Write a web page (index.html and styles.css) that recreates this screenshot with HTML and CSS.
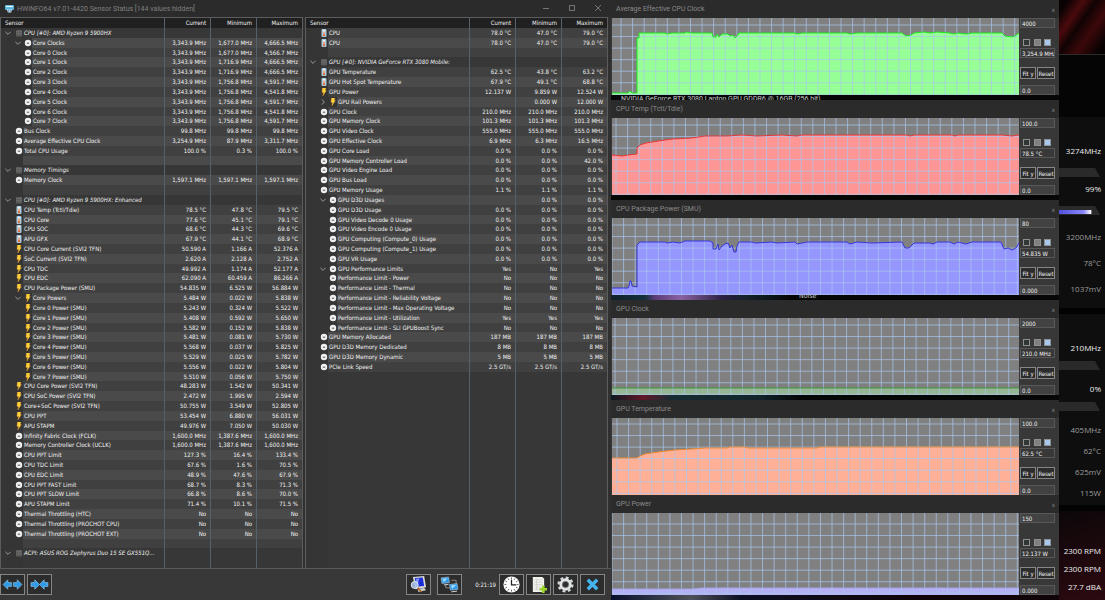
FILE: index.html
```html
<!DOCTYPE html>
<html lang="en">
<head>
  <meta charset="UTF-8">
  <meta name="viewport" content="width=device-width, initial-scale=1.0">
  <title>HWiNFO64 Sensor Status</title>
  <link rel="stylesheet" href="styles.css">
</head>
<body>
  <!-- icon set -->
  <svg class="defs" width="0" height="0" aria-hidden="true">
    <symbol id="i-clock" viewBox="0 0 8 8">
      <circle cx="4" cy="4" r="3.2" fill="#f0f0f0"/>
      <path d="M2.8 4.2H5.2" stroke="#555" stroke-width="1"/>
    </symbol>
    <symbol id="i-temp" viewBox="0 0 8 8">
      <rect x="1.500" y="0" width="5" height="8" rx="1" fill="#a9cbe0"/>
      <path d="M4 1V6" stroke="#fff" stroke-width="1.6"/>
      <path d="M4 2.5V7" stroke="#d9622b" stroke-width="1"/>
      <circle cx="4" cy="6.2" r="1.1" fill="#e06a30"/>
    </symbol>
    <symbol id="i-bolt" viewBox="0 0 8 8">
      <path d="M2.4 0H6L5.2 2.6H6.4L2.8 8L3.6 4.4H2Z" fill="#ffd83c" stroke="#e8912a" stroke-width=".4"/>
    </symbol>
    <symbol id="i-chip" viewBox="0 0 8 8">
      <rect x="1" y="1" width="6" height="6.4" rx="1" fill="#5c5c5c"/>
      <path d="M1 2.6H7M1 4.4H7" stroke="#777" stroke-width=".5"/>
    </symbol>
    <symbol id="i-down" viewBox="0 0 8 8"><path d="M1.4 2.8L4 5.4L6.6 2.8" fill="none" stroke="#9a9a9a"/></symbol>
    <symbol id="i-right" viewBox="0 0 8 8"><path d="M2.8 1.4L5.4 4L2.8 6.6" fill="none" stroke="#9a9a9a"/></symbol>
  </svg>

  <div class="desktop">
    <main class="app">
      <header class="titlebar">
        <svg class="logo" viewBox="0 0 9 9"><rect y="1" width="9" height="5" rx="1" fill="#58b4dc"/><path d="M1 2.5H8" stroke="#e6f6ff" stroke-width="1.2"/><path d="M2 5.2H7L6.2 8.6H2.8Z" fill="#d8e6ee"/><path d="M3.6 5.4V8M5.3 5.4V8" stroke="#2484b8" stroke-width=".7"/></svg>
        <h1>HWiNFO64 v7.01-4420 Sensor Status [144 values hidden]</h1>
        <button class="win-btn" aria-label="Minimize"><svg viewBox="0 0 8 8"><path d="M1 4.5H7"/></svg></button>
        <button class="win-btn" aria-label="Maximize"><svg viewBox="0 0 8 8"><path d="M1.5 1.5H6.5V6.5H1.5Z"/></svg></button>
        <button class="win-btn" aria-label="Close"><svg viewBox="0 0 8 8"><path d="M1 1L7 7M7 1L1 7"/></svg></button>
      </header>

      <div class="panes">
        <div class="pane">
          <table class="sensors">
            <thead><tr><th>Sensor</th><th>Current</th><th>Minimum</th><th>Maximum</th></tr></thead>
            <tbody id="sensors-cpu"></tbody>
          </table>
        </div>
        <div class="pane">
          <table class="sensors">
            <thead><tr><th>Sensor</th><th>Current</th><th>Minimum</th><th>Maximum</th></tr></thead>
            <tbody id="sensors-gpu"></tbody>
          </table>
        </div>
      </div>

      <footer class="toolbar">
        <button class="tool" aria-label="Expand columns"><svg viewBox="0 0 22 18"><path d="M1 9L6 4V7H10V11H6V14ZM21 9L16 4V7H12V11H16V14Z" fill="#2f9be8" stroke="#9ccdf0" stroke-width=".6"/></svg></button>
        <button class="tool" aria-label="Shrink columns"><svg viewBox="0 0 22 18"><path d="M11 9L6 4V7H2V11H6V14ZM11 9L16 4V7H20V11H16V14Z" fill="#2f9be8" stroke="#9ccdf0" stroke-width=".6"/></svg></button>
        <span class="spacer"></span>
        <button class="tool" aria-label="Summary"><svg viewBox="0 0 22 18"><path d="M5 1L17 0L19 12L8 14Z" fill="#dcdcd6"/><path d="M7 2L15.500 1.500L17 10.500L8.500 11.500Z" fill="#1a2cd8"/><path d="M8 3L12 2.500L10 10L8.800 10Z" fill="#7c8cf4"/><path d="M10 14L17 12.500L19 15L11 17Z" fill="#c9c9c4"/><circle cx="7" cy="9.500" r="3.700" fill="#a9c6f0" fill-opacity=".85" stroke="#e8eef6"/><path d="M10 12.500L14 17" stroke="#a9622c" stroke-width="1.800"/></svg></button>
        <button class="tool tool-net" aria-label="Remote"><svg viewBox="0 0 22 18"><path d="M7 9V12.500H12M13 4.500H18V9" stroke="#8a8a8a" fill="none"/><path d="M2 2L10 1L11 7L3 8Z" fill="#2e9df0" stroke="#b4c4d0" stroke-width=".6"/><path d="M3.500 3L9 2.300L5 6.500Z" fill="#a4dcff"/><path d="M5 9.500L10 8.800" stroke="#ddd"/><path d="M11 9L19 8L20 14L12 15Z" fill="#2e9df0" stroke="#b4c4d0" stroke-width=".6"/><path d="M12.500 10L18 9.300L14 13.500Z" fill="#a4dcff"/><path d="M13 16.800L19 16" stroke="#ddd"/></svg></button>
        <time class="uptime">0:21:19</time>
        <button class="tool" aria-label="Reset clock"><svg viewBox="0 0 22 18"><circle cx="11" cy="9" r="8.600" fill="#fff"/><g stroke="#222"><path d="M11 1.500V3.500M11 14.500V16.500M3.500 9H5.500M16.500 9H18.500M7.300 2.500L8.200 4.200M14.700 2.500L13.800 4.200M7.300 15.500L8.200 13.800M14.700 15.500L13.800 13.800M4.500 5.300L6.200 6.200M4.500 12.700L6.200 11.800M17.500 5.300L15.800 6.200M17.500 12.700L15.800 11.800" stroke-width=".7"/><path d="M11 4V9.500H16" fill="none" stroke-width="1.300"/></g></svg></button>
        <button class="tool" aria-label="Logging start"><svg viewBox="0 0 22 18"><path d="M5 1H15L17 3V17H5Z" fill="#f0f0ec"/><path d="M7 4H15M7 6.500H15M7 9H15M7 11.500H13M7 14H12M9 3V15" stroke="#c4c4c0" stroke-width=".6"/><path d="M16 10V18M12 14H20" stroke="#9ed62c" stroke-width="2.800"/></svg></button>
        <button class="tool" aria-label="Settings"><svg viewBox="0 0 22 18"><circle cx="11" cy="9" r="7.300" fill="none" stroke="#d4d8d8" stroke-width="2.400" stroke-dasharray="3.100 2.630"/><circle cx="11" cy="9" r="5" fill="none" stroke="#e2e6e6" stroke-width="3"/><circle cx="11" cy="9" r="3.300" fill="none" stroke="#8b9292" stroke-width=".6"/></svg></button>
        <button class="tool" aria-label="Close sensors"><svg viewBox="0 0 22 18"><path d="M6 4L16 14M16 4L6 14" stroke="#46b2ee" stroke-width="3.600"/></svg></button>
      </footer>
    </main>

    <section class="graphs" id="graphs"></section>

    <aside class="gadget">
      <div class="art"></div>
      <div class="card card-cpu">
        <p class="stat main">3274MHz</p>
        <div class="meter"></div>
        <p class="stat main">99%</p>
        <div class="meter full"></div>
        <p class="stat">3200MHz</p>
        <p class="stat">78°C</p>
        <p class="stat">1037mV</p>
      </div>
      <div class="card card-gpu">
        <p class="stat main">210MHz</p>
        <div class="meter"></div>
        <p class="stat main">0%</p>
        <div class="meter"></div>
        <p class="stat">405MHz</p>
        <p class="stat">62°C</p>
        <p class="stat">625mV</p>
        <p class="stat">115W</p>
      </div>
      <div class="card card-fan">
        <p class="stat main">2300 RPM</p>
        <p class="stat main">2300 RPM</p>
        <p class="stat main">27.7 dBA</p>
      </div>
    </aside>
  </div>

  <script>
    // type|level|name|current|minimum|maximum, an empty line is a spacer row
    // type: g group, c clock, t temperature, p power; + open node, > closed node
    const cpuRows = `g+|0|CPU [#0]: AMD Ryzen 9 5900HX
c+|2|Core Clocks|3,343.9 MHz|1,677.0 MHz|4,666.5 MHz
c|2|Core 0 Clock|3,343.9 MHz|1,677.0 MHz|4,566.7 MHz
c|2|Core 1 Clock|3,343.9 MHz|1,716.9 MHz|4,666.5 MHz
c|2|Core 2 Clock|3,343.9 MHz|1,716.9 MHz|4,666.5 MHz
c|2|Core 3 Clock|3,343.9 MHz|1,756.8 MHz|4,591.7 MHz
c|2|Core 4 Clock|3,343.9 MHz|1,756.8 MHz|4,541.8 MHz
c|2|Core 5 Clock|3,343.9 MHz|1,756.8 MHz|4,591.7 MHz
c|2|Core 6 Clock|3,343.9 MHz|1,756.8 MHz|4,541.8 MHz
c|2|Core 7 Clock|3,343.9 MHz|1,756.8 MHz|4,591.7 MHz
c|1|Bus Clock|99.8 MHz|99.8 MHz|99.8 MHz
c|1|Average Effective CPU Clock|3,254.9 MHz|87.9 MHz|3,311.7 MHz
c|1|Total CPU Usage|100.0 %|0.3 %|100.0 %

g+|0|Memory Timings
c|1|Memory Clock|1,597.1 MHz|1,597.1 MHz|1,597.1 MHz

g+|0|CPU [#0]: AMD Ryzen 9 5900HX: Enhanced
t|1|CPU Temp (Tctl/Tdie)|78.5 °C|47.8 °C|79.5 °C
t|1|CPU Core|77.6 °C|45.1 °C|79.1 °C
t|1|CPU SOC|68.6 °C|44.3 °C|69.6 °C
t|1|APU GFX|67.9 °C|44.1 °C|68.9 °C
p|1|CPU Core Current (SVI2 TFN)|50.590 A|1.166 A|52.376 A
p|1|SoC Current (SVI2 TFN)|2.620 A|2.128 A|2.752 A
p|1|CPU TDC|49.992 A|1.174 A|52.177 A
p|1|CPU EDC|62.090 A|60.459 A|86.266 A
p|1|CPU Package Power (SMU)|54.835 W|6.525 W|56.884 W
p+|2|Core Powers|5.484 W|0.022 W|5.838 W
p|2|Core 0 Power (SMU)|5.243 W|0.324 W|5.522 W
p|2|Core 1 Power (SMU)|5.408 W|0.592 W|5.650 W
p|2|Core 2 Power (SMU)|5.582 W|0.152 W|5.838 W
p|2|Core 3 Power (SMU)|5.481 W|0.081 W|5.730 W
p|2|Core 4 Power (SMU)|5.568 W|0.037 W|5.825 W
p|2|Core 5 Power (SMU)|5.529 W|0.025 W|5.782 W
p|2|Core 6 Power (SMU)|5.556 W|0.022 W|5.804 W
p|2|Core 7 Power (SMU)|5.510 W|0.056 W|5.750 W
p|1|CPU Core Power (SVI2 TFN)|48.283 W|1.542 W|50.341 W
p|1|CPU SoC Power (SVI2 TFN)|2.472 W|1.995 W|2.594 W
p|1|Core+SoC Power (SVI2 TFN)|50.755 W|3.549 W|52.805 W
p|1|CPU PPT|53.454 W|6.880 W|56.031 W
p|1|APU STAPM|49.976 W|7.050 W|50.030 W
c|1|Infinity Fabric Clock (FCLK)|1,600.0 MHz|1,387.6 MHz|1,600.0 MHz
c|1|Memory Controller Clock (UCLK)|1,600.0 MHz|1,387.6 MHz|1,600.0 MHz
c|1|CPU PPT Limit|127.3 %|16.4 %|133.4 %
c|1|CPU TDC Limit|67.6 %|1.6 %|70.5 %
c|1|CPU EDC Limit|48.9 %|47.6 %|67.9 %
c|1|CPU PPT FAST Limit|68.7 %|8.3 %|71.3 %
c|1|CPU PPT SLOW Limit|66.8 %|8.6 %|70.0 %
c|1|APU STAPM Limit|71.4 %|10.1 %|71.5 %
c|1|Thermal Throttling (HTC)|No|No|No
c|1|Thermal Throttling (PROCHOT CPU)|No|No|No
c|1|Thermal Throttling (PROCHOT EXT)|No|No|No

g+|0|ACPI: ASUS ROG Zephyrus Duo 15 SE GX551Q...`;

    const gpuRows = `t|1|CPU|78.0 °C|47.0 °C|79.0 °C
t|1|CPU|78.0 °C|47.0 °C|79.0 °C

g+|0|GPU [#0]: NVIDIA GeForce RTX 3080 Mobile:
t|1|GPU Temperature|62.5 °C|43.8 °C|63.2 °C
t|1|GPU Hot Spot Temperature|67.9 °C|49.1 °C|68.8 °C
p|1|GPU Power|12.137 W|9.859 W|12.524 W
p>|2|GPU Rail Powers||0.000 W|12.000 W
c|1|GPU Clock|210.0 MHz|210.0 MHz|210.0 MHz
c|1|GPU Memory Clock|101.3 MHz|101.3 MHz|101.3 MHz
c|1|GPU Video Clock|555.0 MHz|555.0 MHz|555.0 MHz
c|1|GPU Effective Clock|6.9 MHz|6.3 MHz|16.5 MHz
c|1|GPU Core Load|0.0 %|0.0 %|0.0 %
c|1|GPU Memory Controller Load|0.0 %|0.0 %|42.0 %
c|1|GPU Video Engine Load|0.0 %|0.0 %|0.0 %
c|1|GPU Bus Load|0.0 %|0.0 %|0.0 %
c|1|GPU Memory Usage|1.1 %|1.1 %|1.1 %
c+|2|GPU D3D Usages||0.0 %|0.0 %
c|2|GPU D3D Usage|0.0 %|0.0 %|0.0 %
c|2|GPU Video Decode 0 Usage|0.0 %|0.0 %|0.0 %
c|2|GPU Video Encode 0 Usage|0.0 %|0.0 %|0.0 %
c|2|GPU Computing (Compute_0) Usage|0.0 %|0.0 %|0.0 %
c|2|GPU Computing (Compute_1) Usage|0.0 %|0.0 %|0.0 %
c|2|GPU VR Usage|0.0 %|0.0 %|0.0 %
c+|2|GPU Performance Limits|Yes|No|Yes
c|2|Performance Limit - Power|No|No|No
c|2|Performance Limit - Thermal|No|No|No
c|2|Performance Limit - Reliability Voltage|No|No|No
c|2|Performance Limit - Max Operating Voltage|No|No|No
c|2|Performance Limit - Utilization|Yes|Yes|Yes
c|2|Performance Limit - SLI GPUBoost Sync|No|No|No
c|1|GPU Memory Allocated|187 MB|187 MB|187 MB
c|1|GPU D3D Memory Dedicated|8 MB|8 MB|8 MB
c|1|GPU D3D Memory Dynamic|5 MB|5 MB|5 MB
c|1|PCIe Link Speed|2.5 GT/s|2.5 GT/s|2.5 GT/s`;

    const icons = { g: 'i-chip', c: 'i-clock', t: 'i-temp', p: 'i-bolt' };
    const ROWS = 55;

    function use(id) {
      return `<svg class="icon"><use href="#${id}"/></svg>`;
    }

    // build the table body and pad it with empty rows
    function fillTable(id, text) {
      const lines = text.split('\n');
      let html = '';
      for (let i = 0; i < ROWS; i++) {
        if (i >= lines.length || lines[i] === '') {
          const cls = i >= lines.length ? 'filler' : 'blank';
          html += `<tr class="${cls}"><td class="name"><span class="tree"></span></td><td></td><td></td><td></td></tr>`;
          continue;
        }
        const [type, level, name, cur = '', min = '', max = ''] = lines[i].split('|');
        const arrow = type[1] ? use(type[1] === '+' ? 'i-down' : 'i-right') : '';
        html += `<tr class="level-${level}">
          <td class="name"><span class="tree">${arrow}${use(icons[type[0]])}</span><span class="label">${name}</span></td>
          <td>${cur}</td><td>${min}</td><td>${max}</td></tr>`;
      }
      document.getElementById(id).innerHTML = html;
    }

    // graph windows: points are x,y pairs in viewBox units
    const graphs = [
      { title: 'Average Effective CPU Clock', top: '4000', value: '3,254.9 MHz', low: '0.0', cls: 'green', h: 77, gx: 9, gy: 7,
        behind: 'NVIDIA GeForce RTX 3080 Laptop GPU GDDR6 @ 16GB (256 bit)',
        pts: '0,75 16,75 18,73 20,75 25,75 25,20 27,20 27,15 53,15 55,16 60,15 73,15 74,14 80,15 100,15 101,19 104,19 105,16 107,19 110,16 116,16 118,18 121,17 123,20 125,18 127,15 183,15 185,16 190,15 235,15 238,16 245,15 290,15 294,18 299,17 302,15 312,14 318,15 325,14 338,15 342,16 346,15 354,16 360,15 390,15 393,18 400,19 403,18 407,15' },
      { title: 'CPU Temp (Tctl/Tdie)', top: '100.0', value: '78.5 °C', low: '0.0', cls: 'red', h: 77, gx: 4, gy: 7,
        pts: '0,37 10,38 16,37 25,36 25,30 28,27 34,25 46,23 60,21 80,20 93,18 115,18 130,17 145,18 170,17 185,18 190,17 295,17 298,18 302,17 340,17 343,18 346,17 390,17 400,18 407,17' },
      { title: 'CPU Package Power (SMU)', top: '80', value: '54.835 W', low: '0.000', cls: 'blue', h: 77, gx: 0, gy: 7, behind: 'Noise',
        pts: '0,70 16,70 17,68 18,63 19,63 20,68 25,69 25,27 28,24 53,24 55,25 61,24 68,25 73,23 98,23 101,25 101,31 104,31 106,26 107,32 110,28 113,26 116,25 118,30 120,27 122,34 124,34 125,28 127,24 140,24 143,25 160,24 165,25 183,24 185,26 195,24 235,24 238,26 245,24 260,25 290,24 293,30 297,30 302,25 318,25 321,26 325,24 338,24 342,26 346,24 354,26 360,24 389,24 392,31 396,30 400,32 404,30 407,25' },
      { title: 'GPU Clock', top: '2000', value: '210.0 MHz', low: '0.0', cls: 'dark-green', h: 77, gx: 3, gy: 7, pts: '0,70 407,70' },
      { title: 'GPU Temperature', top: '100.0', value: '62.5 °C', low: '0.0', cls: 'orange', h: 77, gx: 5, gy: 6,
        pts: '0,40 25,40 28,38 33,36 46,34 63,32 80,31 93,30 115,30 118,29 133,29 136,30 205,30 208,29 407,29' },
      { title: 'GPU Power', top: '150', value: '12.137 W', low: '0.000', cls: 'violet', h: 82, gx: 0, gy: 11, pts: '0,76 80,76 90,75 407,75' }
    ];

    function gridLines(g) {
      let d = '';
      for (let x = g.gx; x < 407; x += 11.58) d += `M${x} 0V${g.h}`;
      for (let y = g.gy; y < g.h; y += 11.55) d += `M0 ${y}H407`;
      return d;
    }

    document.getElementById('graphs').innerHTML = graphs.map((g, i) => `
      <article class="graph ${g.cls}">
        <header class="graph-title"><h2>${g.title}</h2><button class="graph-close" aria-label="Close">x</button></header>
        <div class="graph-body">
          <svg class="plot" viewBox="0 0 407 ${g.h}" preserveAspectRatio="none">
            <path class="area" d="M0 ${g.h}L${g.pts} 407,${g.h}Z"/>
            <path class="lines" d="${gridLines(g)}"/>
            <polyline class="trace" points="${g.pts}"/>
          </svg>
          <div class="controls">
            <input class="field" value="${g.top}" aria-label="${g.title} maximum">
            <div class="swatches">
              <button class="swatch line" aria-label="Line color"></button>
              <button class="swatch back" aria-label="Background color"></button>
              <button class="swatch mesh" aria-label="Grid color"></button>
            </div>
            <input class="field value" value="${g.value}" aria-label="${g.title} value" readonly>
            <div class="actions"><button>Fit y</button><button>Reset</button></div>
            <input class="field" value="${g.low}" aria-label="${g.title} minimum">
          </div>
        </div>
        <div class="behind behind-${i}">${g.behind || ''}</div>
      </article>`).join('');

    fillTable('sensors-cpu', cpuRows);
    fillTable('sensors-gpu', gpuRows);
  </script>
</body>
</html>
```
FILE: styles.css
```css
* {
  box-sizing: border-box;
}
body {
  margin: 0;
  background: #050506;
  color: #f2f2f2;
  font-family: "DejaVu Sans Condensed", "Noto Sans", sans-serif;
  font-size: 6px;
}
h1, h2, p {
  margin: 0;
  font-weight: normal;
}
button, input {
  font: inherit;
  color: inherit;
  margin: 0;
  padding: 0;
}
.defs {
  position: absolute;
}
.desktop {
  display: grid;
  grid-template-columns: 611fr 448fr 46fr;
  height: 100vh;
}

/* sensor window */
.app {
  display: flex;
  flex-direction: column;
  min-width: 0;
  min-height: 0;
  background: #383838;
}
.titlebar {
  display: flex;
  align-items: center;
  height: 17px;
  background: #2b2b2b;
  color: #808080;
}
.titlebar h1 {
  flex: 1;
  font-family: Roboto, "Open Sans", sans-serif;
  font-size: 7px;
}
.logo {
  width: 9px;
  height: 9px;
  margin: 0 3px 0 5px;
}
.win-btn {
  width: 26px;
  height: 17px;
  border: 0;
  background: none;
}
.win-btn svg {
  width: 8px;
  height: 8px;
  fill: none;
  stroke: #8a8a8a;
  stroke-width: 0.8;
}
.panes {
  flex: 1;
  display: grid;
  grid-template-columns: 1fr 1fr;
  gap: 2px;
  min-height: 0;
  padding-right: 3px;
  background: #303030;
  border-bottom: 1px solid #5a5a5a;
}
.pane {
  min-width: 0;
  min-height: 0;
  border: 1px solid #5c5c5c;
  border-width: 1px 1px 0 1px;
}
.sensors {
  display: flex;
  flex-direction: column;
  height: 100%;
}
.sensors thead {
  display: block;
  background: #202020;
}
.sensors tbody {
  flex: 1;
  display: grid;
  grid-auto-rows: minmax(0, 1fr);
  min-height: 0;
}
.sensors tr {
  display: grid;
  grid-template-columns: 1fr 46px 46px 46px;
  background: #404040;
  line-height: 10px;
}
.sensors thead tr {
  background: none;
}
.sensors tbody tr:nth-child(even) {
  background: #4a4a4a;
}
.sensors tbody tr.level-0,
.sensors tbody tr.filler {
  background: #373737;
}
.sensors th {
  padding: 0 4px;
  font-weight: normal;
  text-align: left;
}
.sensors td {
  padding: 0 4px;
  text-align: right;
  white-space: nowrap;
}
.sensors th + th {
  text-align: right;
}
.sensors th + th,
.sensors td + td {
  border-left: 1px solid #56606a;
}
.sensors .name {
  display: flex;
  min-width: 0;
  padding: 0;
  text-align: left;
}
.tree {
  display: flex;
  justify-content: flex-end;
  align-items: center;
  flex: none;
  width: 22px;
  background: #353535;
}
.level-2 .tree {
  gap: 2px;
  width: 31px;
}
.level-0 .tree {
  justify-content: space-between;
  padding-left: 3px;
}
.level-0 .label {
  font-style: italic;
}
.label {
  padding-left: 1px;
}
.icon {
  width: 8px;
  height: 8px;
}

/* toolbar */
.toolbar {
  display: flex;
  align-items: center;
  gap: 2px;
  height: 31px;
  padding: 0 6px 1px 0;
}
.tool {
  display: flex;
  justify-content: center;
  width: 25px;
  height: 21px;
  padding: 1px;
  border: 1px solid #858585;
  background: #2c2c2c;
}
.tool svg {
  width: 21px;
  height: 17px;
}
.spacer {
  flex: 1;
}
.tool-net {
  margin-left: 4px;
}
.uptime {
  padding: 0 1px 0 11px;
}

/* graph windows */
.graphs {
  display: grid;
  grid-template-rows: repeat(4, 100fr) 95fr 105fr;
  min-width: 0;
  min-height: 0;
}
.graph {
  display: flex;
  flex-direction: column;
  min-height: 0;
  overflow: hidden;
}
.graph-title {
  display: flex;
  justify-content: space-between;
  align-items: center;
  flex: none;
  height: 18px;
  padding: 0 4px 0 5px;
  background: #2b2b2b;
  color: #8a8a8a;
}
.graph-title h2 {
  font-family: Roboto, "Open Sans", sans-serif;
  font-size: 7px;
}
.graph-close {
  border: 0;
  background: none;
}
.graph-body {
  flex: 1;
  display: flex;
  min-height: 0;
  padding-left: 1px;
  background: #383838;
}
.plot {
  flex: 1;
  min-width: 0;
  height: 100%;
  background: #808080;
}
.plot .lines {
  fill: none;
  stroke: #a9c6ee;
  stroke-opacity: 0.7;
}
.plot .trace {
  fill: none;
  vector-effect: non-scaling-stroke;
}
.green .area { fill: #96ff96; }
.green .trace { stroke: #20e820; }
.red .area { fill: #ff9696; }
.red .trace { stroke: #e83838; }
.blue .area { fill: #9696ff; }
.blue .trace { stroke: #3838d8; }
.dark-green .area { fill: #96b696; }
.dark-green .trace { stroke: #3c963c; }
.orange .area { fill: #ffb096; }
.orange .trace { stroke: #f08a30; }
.violet .area { fill: #b4b0f4; }
.violet .trace { stroke: #a8a4e4; }
.controls {
  display: flex;
  flex-direction: column;
  flex: none;
  width: 40px;
  padding: 0 4px 0 1px;
}
.field {
  width: 100%;
  height: 10px;
  padding: 0 0 0 1px;
  border: 1px solid #585858;
  background: #424242;
}
.field.value {
  background: #383838;
}
.swatches {
  display: flex;
  justify-content: space-between;
  margin-top: auto;
  padding: 0 4px 2px 3px;
}
.swatch {
  width: 7px;
  height: 7px;
  border: 1px solid #909090;
}
.swatch.line { background: #303633; }
.swatch.back { background: #808080; }
.swatch.mesh { background: #a9c8f0; }
.actions {
  display: flex;
  gap: 1px;
  margin: 9px 0 6px;
}
.actions button {
  flex: 15;
  height: 12px;
  border: 1px solid #868686;
  background: #2c2c2c;
}
.actions button + button {
  flex: 17;
}
.behind {
  flex: none;
  height: 5px;
  padding-left: 10px;
  overflow: hidden;
  background: #060607;
  line-height: 8px;
  color: #c8c8c8;
}
.behind-0 {
  font-family: Roboto, sans-serif;
  font-size: 7px;
}
.behind-2 {
  display: flex;
  align-items: flex-end;
  padding-left: 188px;
  font-size: 7px;
  background: linear-gradient(90deg, #10202a 0, #14303a 34px, #5a3a74 44px, #8a62a4 70px, #2a2040 112px, #102028 140px, #060607 180px);
}
.behind-3 {
  background: linear-gradient(90deg, #0c1820 0, #601828 32px, #182c34 60px, #10242a 150px, #060607 190px);
}
.behind-4 {
  display: none;
}
.behind-5 {
  background: linear-gradient(90deg, #08102c 0, #4c5058 80px, #0c1024 130px, #100408 300px);
}

/* side gadget */
.gadget {
  display: grid;
  grid-template-rows: 55fr 62fr 197fr 197fr 89fr;
  min-width: 0;
  min-height: 0;
  font-family: "Open Sans", sans-serif;
  font-size: 8px;
  line-height: 12px;
  text-align: right;
}
.art {
  background: linear-gradient(125deg, #080203 10%, #4a0a0c 30%, #100304 45%, #3c080a 65%, #080203 90%);
  border-bottom: 1px solid #2c2c2c;
}
.card {
  background: #0e0e0f;
  border-bottom: 6px solid #030303;
}
.stat {
  padding-right: 4px;
  color: #9c9c9c;
  white-space: nowrap;
}
.stat.main {
  color: #ededed;
}
.meter {
  height: 9px;
  margin-right: 5px;
  background: #2a2a2b;
  clip-path: polygon(0 0, 88% 0, 100% 100%, 0 100%);
}
.meter.full {
  background: linear-gradient(90deg, #5050e0, #8888f8 60%, #ffffff 78%, #2a2a2b 80%) 0 4px / 100% 4px no-repeat, #2a2a2b;
}
.card-cpu {
  grid-row: 3;
  padding-top: 28px;
}
.card-cpu .meter {
  margin-top: 11px;
  margin-bottom: 6px;
}
.card-cpu .meter.full {
  margin-bottom: 16px;
}
.card-cpu .stat:not(.main) + .stat {
  margin-top: 14px;
}
.card-gpu {
  grid-row: 4;
  padding-top: 28px;
}
.card-gpu .meter {
  margin-top: 7px;
  margin-bottom: 13px;
}
.card-gpu .stat:not(.main) + .stat {
  margin-top: 9px;
}
.card-fan {
  grid-row: 5;
  display: flex;
  flex-direction: column;
  justify-content: flex-end;
  gap: 6px;
  padding-bottom: 7px;
  border-bottom: 0;
  background: linear-gradient(160deg, #0c0709, #2c0a10);
}
```
